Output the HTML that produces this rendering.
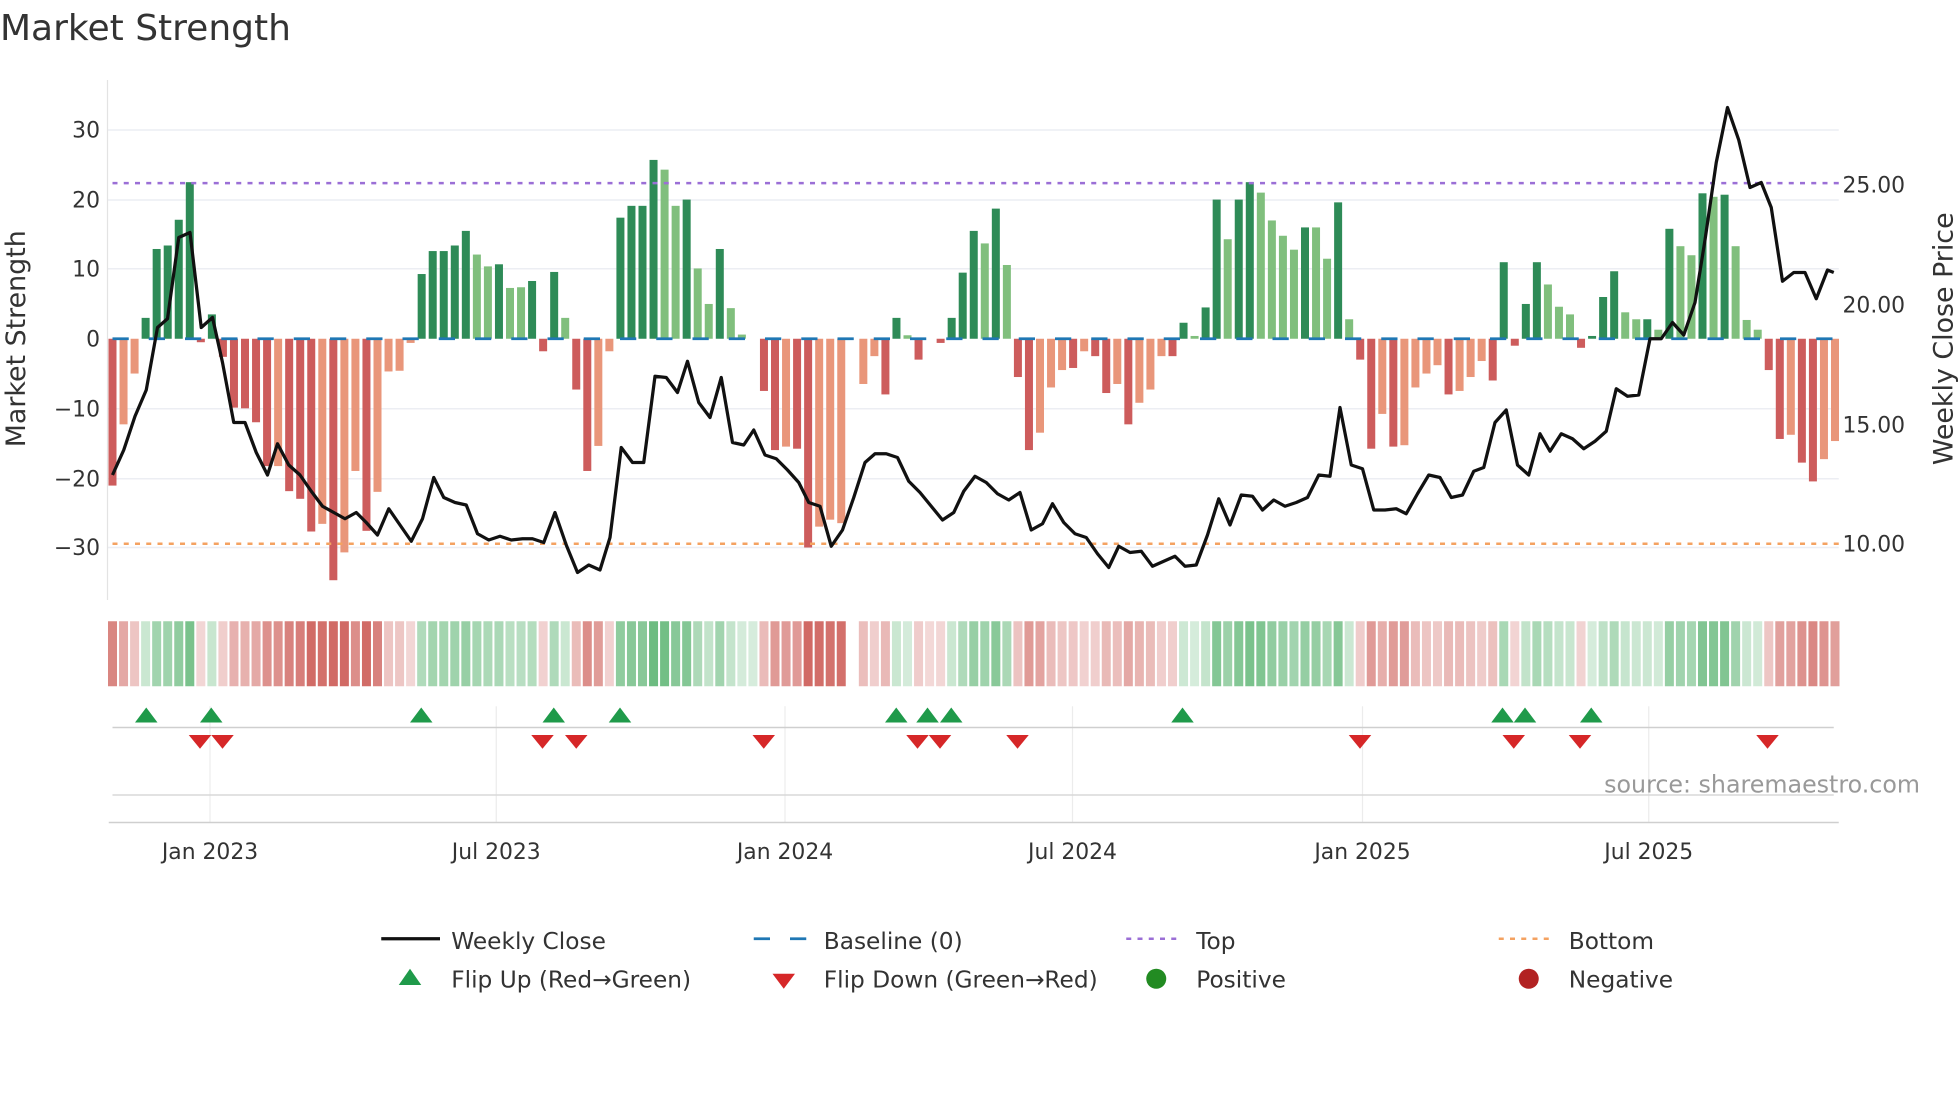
<!DOCTYPE html>
<html><head><meta charset="utf-8"><style>
html,body{margin:0;padding:0;background:#fff;}
svg{display:block;font-family:"DejaVu Sans","Liberation Sans",sans-serif;}
</style></head><body>
<svg id="s" width="1960" height="1102" viewBox="0 0 1568 881.6" xmlns="http://www.w3.org/2000/svg">
<rect width="1568" height="882" fill="#fff"/>
<text x="0" y="32" font-size="28.8" fill="#333">Market Strength</text>
<g stroke="#eceef3" stroke-width="1.2">
<line x1="86" x2="1471" y1="104" y2="104"/><line x1="86" x2="1471" y1="160" y2="160"/>
<line x1="86" x2="1471" y1="215" y2="215"/><line x1="86" x2="1471" y1="327" y2="327"/>
<line x1="86" x2="1471" y1="383" y2="383"/><line x1="86" x2="1471" y1="438" y2="438"/>
</g>
<line x1="86" x2="86" y1="64" y2="480" stroke="#e3e3e3" stroke-width="1"/>
<g font-size="17.5" fill="#333" text-anchor="end">
<text x="80" y="110">30</text><text x="80" y="166">20</text><text x="80" y="221">10</text>
<text x="80" y="277">0</text><text x="80" y="333">−10</text><text x="80" y="389">−20</text><text x="80" y="444">−30</text>
</g>
<g font-size="17.5" fill="#333">
<text x="1474" y="154">25.00</text><text x="1474" y="250">20.00</text><text x="1474" y="346">15.00</text><text x="1474" y="441">10.00</text>
</g>
<text transform="translate(20,271) rotate(-90)" font-size="21.5" fill="#333" text-anchor="middle">Market Strength</text>
<text transform="translate(1562,271) rotate(-90)" font-size="21.5" fill="#333" text-anchor="middle">Weekly Close Price</text>
<g id="bars"></g>
<line x1="90" x2="1471" y1="271" y2="271" stroke="#1f77b4" stroke-width="2.2" stroke-dasharray="13 16"/>
<line x1="90" x2="1471" y1="146.5" y2="146.5" stroke="#9b6fd6" stroke-width="2" stroke-dasharray="4 5"/>
<line x1="90" x2="1471" y1="435" y2="435" stroke="#f4a261" stroke-width="2" stroke-dasharray="4 5"/>
<polyline id="price" fill="none" stroke="#111" stroke-width="2.6" stroke-linejoin="round"/>
<g id="heat"></g>
<g stroke="#ececec" stroke-width="1">
<line x1="168" x2="168" y1="565" y2="658"/><line x1="397" x2="397" y1="565" y2="658"/>
<line x1="628" x2="628" y1="565" y2="658"/><line x1="858" x2="858" y1="565" y2="658"/>
<line x1="1090" x2="1090" y1="565" y2="658"/><line x1="1319" x2="1319" y1="565" y2="658"/>
</g>
<line x1="90" x2="1467" y1="582" y2="582" stroke="#cfcfcf" stroke-width="1.2"/>
<line x1="90" x2="1467" y1="636" y2="636" stroke="#d8d8d8" stroke-width="1.2"/>
<line x1="87" x2="1471" y1="658" y2="658" stroke="#cfcfcf" stroke-width="1.2"/>
<g id="marks"></g>
<text x="1536" y="634" font-size="19" fill="#999" text-anchor="end">source: sharemaestro.com</text>
<g font-size="17.5" fill="#333" text-anchor="middle">
<text x="168" y="687">Jan 2023</text><text x="397" y="687">Jul 2023</text><text x="628" y="687">Jan 2024</text>
<text x="858" y="687">Jul 2024</text><text x="1090" y="687">Jan 2025</text><text x="1319" y="687">Jul 2025</text>
</g>
<g font-size="18.6" fill="#333">
<line x1="305" x2="352" y1="751" y2="751" stroke="#111" stroke-width="2.6"/><text x="361" y="759">Weekly Close</text>
<line x1="603" x2="646" y1="751" y2="751" stroke="#1f77b4" stroke-width="2.2" stroke-dasharray="13 16"/><text x="659" y="759">Baseline (0)</text>
<line x1="901" x2="945" y1="751" y2="751" stroke="#9b6fd6" stroke-width="2" stroke-dasharray="4 5"/><text x="957" y="759">Top</text>
<line x1="1199" x2="1243" y1="751" y2="751" stroke="#f4a261" stroke-width="2" stroke-dasharray="4 5"/><text x="1255" y="759">Bottom</text>
<polygon points="319,788 337,788 328,775" fill="#1f9a4a"/><text x="361" y="790">Flip Up (Red→Green)</text>
<polygon points="618,779 636,779 627,791" fill="#d62728"/><text x="659" y="790">Flip Down (Green→Red)</text>
<circle cx="925" cy="783" r="8" fill="#228b22"/><text x="957" y="790">Positive</text>
<circle cx="1223" cy="783" r="8" fill="#b22222"/><text x="1255" y="790">Negative</text>
</g>
</svg>
<script>
var NS="http://www.w3.org/2000/svg";
function el(t,a,p){var e=document.createElementNS(NS,t);for(var k in a)e.setAttribute(k,a[k]);p.appendChild(e);return e;}
var D=[[-21.1,'r'],[-12.3,'o'],[-5,'o'],[3,'g'],[12.9,'g'],[13.4,'g'],[17.1,'g'],[22.5,'g'],[-0.5,'r'],[3.5,'g'],
[-2.6,'r'],[-9.9,'r'],[-10,'r'],[-12,'r'],[-18.3,'r'],[-18.3,'o'],[-21.9,'r'],[-23,'r'],[-27.7,'r'],[-26.6,'o'],
[-34.7,'r'],[-30.7,'o'],[-19,'o'],[-27.6,'r'],[-22,'o'],[-4.7,'o'],[-4.6,'o'],[-0.6,'o'],[9.3,'g'],[12.6,'g'],
[12.6,'g'],[13.4,'g'],[15.5,'g'],[12.1,'l'],[10.4,'l'],[10.7,'g'],[7.3,'l'],[7.4,'l'],[8.3,'g'],[-1.8,'r'],
[9.6,'g'],[3,'l'],[-7.3,'r'],[-19,'r'],[-15.4,'o'],[-1.8,'o'],[17.4,'g'],[19.1,'g'],[19.1,'g'],[25.7,'g'],
[24.3,'l'],[19.1,'l'],[20,'g'],[10.1,'l'],[5,'l'],[12.9,'g'],[4.4,'l'],[0.6,'l'],[0,'l'],[-7.5,'r'],
[-16,'r'],[-15.5,'o'],[-15.8,'r'],[-30,'r'],[-27,'o'],[-26,'o'],[-26.5,'o'],[0,'o'],[-6.5,'o'],[-2.5,'o'],
[-8,'r'],[3,'g'],[0.5,'l'],[-3,'r'],[0,'r'],[-0.6,'r'],[3,'g'],[9.5,'g'],[15.5,'g'],[13.7,'l'],
[18.7,'g'],[10.6,'l'],[-5.5,'r'],[-16,'r'],[-13.5,'o'],[-7,'o'],[-4.5,'o'],[-4.2,'r'],[-1.8,'o'],[-2.5,'r'],
[-7.8,'r'],[-6.5,'o'],[-12.3,'r'],[-9.2,'o'],[-7.3,'o'],[-2.5,'o'],[-2.5,'r'],[2.3,'g'],[0.4,'l'],[4.5,'g'],
[20,'g'],[14.3,'l'],[20,'g'],[22.5,'g'],[21,'l'],[17,'l'],[14.8,'l'],[12.8,'l'],[16,'g'],[16,'l'],
[11.5,'l'],[19.6,'g'],[2.8,'l'],[-3,'r'],[-15.8,'r'],[-10.8,'o'],[-15.5,'r'],[-15.3,'o'],[-7,'o'],[-5,'o'],
[-3.8,'o'],[-8,'r'],[-7.5,'o'],[-5.5,'o'],[-3.2,'o'],[-6,'r'],[11,'g'],[-1,'r'],[5,'g'],[11,'g'],
[7.8,'l'],[4.6,'l'],[3.5,'l'],[-1.3,'r'],[0.4,'g'],[6,'g'],[9.7,'g'],[3.8,'l'],[2.8,'l'],[2.8,'g'],
[1.3,'l'],[15.8,'g'],[13.3,'l'],[12,'l'],[20.9,'g'],[20.4,'l'],[20.7,'g'],[13.3,'l'],[2.7,'l'],[1.3,'l'],
[-4.5,'r'],[-14.4,'r'],[-13.8,'o'],[-17.8,'r'],[-20.5,'r'],[-17.3,'o'],[-14.7,'o']];
var C={g:'#2e8b57',l:'#80bf7d',r:'#cd5c5c',o:'#e9967a'};
var bars=document.getElementById('bars'),heat=document.getElementById('heat');
var sp=(1468-90)/(D.length-1),prev=-1;
for(var i=0;i<D.length;i++){var x=90+sp*i,v=D[i][0];
 var y0=271,y1=271-v*5.567;
 if(Math.abs(v)>0.05) el('rect',{x:x-3.2,y:Math.min(y0,y1),width:6.4,height:Math.abs(y1-y0),fill:C[D[i][1]]},bars);
 if(i==67) continue;
 var s=v>0.05?1:(v<-0.05?-1:prev);prev=s;
 var t=Math.min(1,Math.abs(v)/28),a=0.22+0.62*t;
 var col=s>0?'rgba(70,170,95,'+a+')':'rgba(200,78,72,'+a+')';
 el('rect',{x:x-3.6,y:497,width:7.2,height:52,fill:col},heat);
}
var P=[90,380,99,360,108,333,117,312,126,262,134,255,143,190,152,186,161,262,170,254,178,290,187,338,196,338,205,362,214,380,222,355,231,372,240,380,249,393,258,405,267,410,276,415,285,410,293,418,302,428,311,407,320,420,329,433,338,415,347,382,355,398,364,402,373,404,382,427,391,432,400,429,409,432,418,431,426,431,435,434,444,410,453,436,462,458,471,452,480,456,488,430,497,358,506,370,515,370,524,301,533,302,542,314,550,289,559,322,568,334,577,302,586,354,595,356,603,344,612,364,621,367,630,376,639,386,647,402,656,405,665,437,674,424,683,398,692,370,700,363,709,363,718,366,727,385,736,394,745,405,754,416,763,410,771,393,780,381,789,386,798,395,807,400,816,394,825,424,834,419,842,403,851,418,860,427,869,430,878,443,887,454,895,437,904,442,913,441,922,453,931,449,940,445,948,453,957,452,966,428,975,399,984,420,993,396,1002,397,1010,408,1019,400,1028,405,1037,402,1046,398,1055,380,1064,381,1072,326,1081,372,1090,375,1099,408,1108,408,1117,407,1125,411,1134,395,1143,380,1152,382,1161,398,1170,396,1179,377,1187,374,1196,338,1205,328,1214,372,1223,380,1232,347,1240,361,1249,347,1258,351,1267,359,1276,353,1285,345,1293,311,1302,317,1311,316,1320,271,1329,271,1338,258,1347,268,1356,242,1364,192,1373,130,1382,86,1391,112,1400,150,1409,146,1417,166,1426,225,1435,218,1444,218,1453,239,1462,216,1467,218];
var pts=[];for(var j=0;j<P.length;j+=2)pts.push(P[j]+','+P[j+1]);
document.getElementById('price').setAttribute('points',pts.join(' '));
var m=document.getElementById('marks');
[117,169,337,443,496,717,742,761,946,1202,1220,1273].forEach(function(x){el('polygon',{points:(x-9)+',578 '+(x+9)+',578 '+x+',566',fill:'#1f9a4a'},m);});
[160,178,434,461,611,734,752,814,1088,1211,1264,1414].forEach(function(x){el('polygon',{points:(x-9)+',588 '+(x+9)+',588 '+x+',599',fill:'#d62728'},m);});
</script>
</body></html>
